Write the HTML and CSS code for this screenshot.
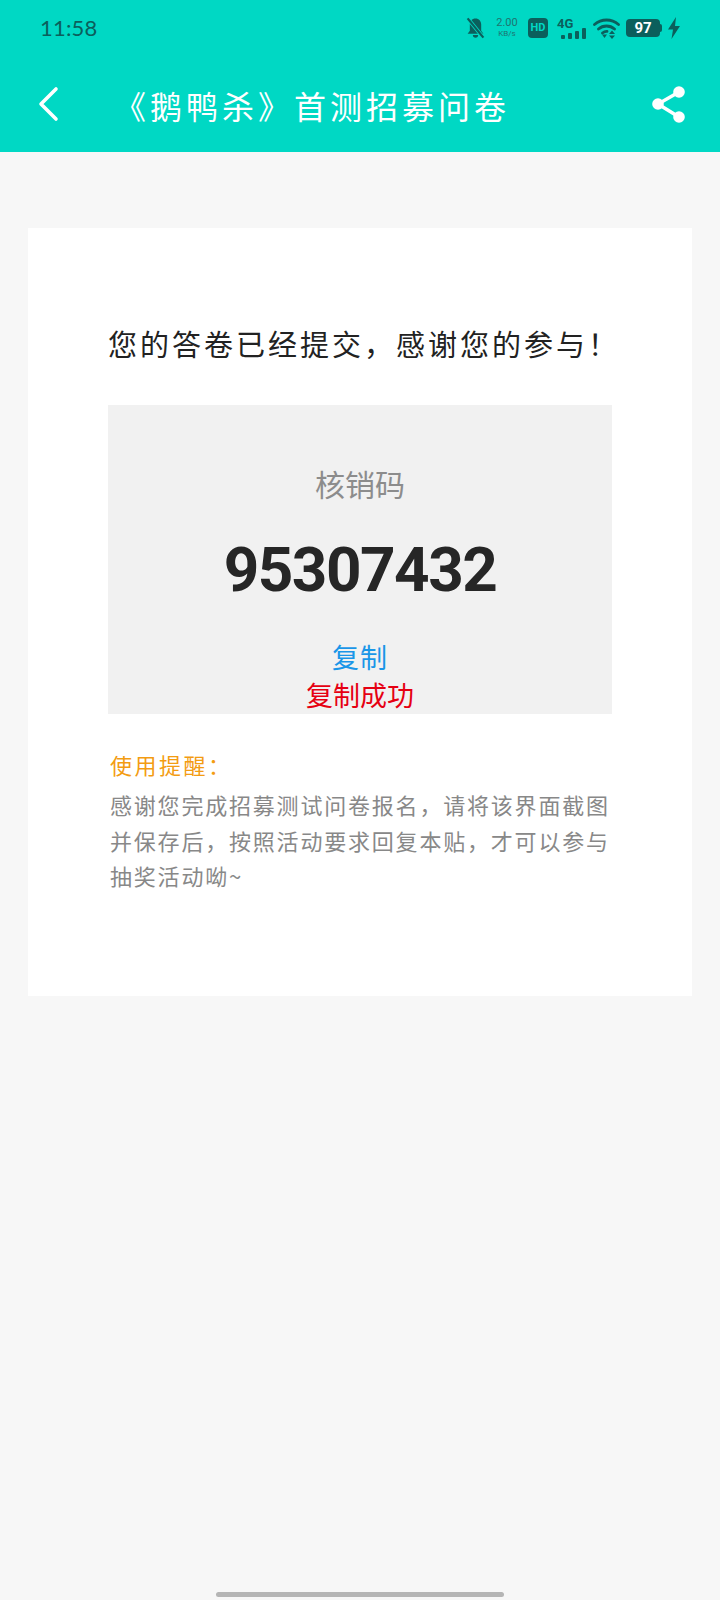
FILE: index.html
```html
<!DOCTYPE html>
<html lang="zh-CN">
<head>
    <meta charset="UTF-8">
    <meta name="viewport" content="width=device-width, initial-scale=1.0">
    <title>《鹅鸭杀》首测招募问卷</title>
    <link rel="stylesheet" href="styles.css">
</head>
<body>
    <header class="top">
        <div class="status">
            <span class="time">11:58</span>
            <div class="status-icons">
                <svg class="icon-bell" width="21" height="24" viewBox="0 0 24 26">
                    <path d="M12 2c-4 0-6.500 3-6.500 7v7L3 19.500h18L18.500 16V9c0-4-2.500-7-6.500-7z" fill="#0b5f5c"/>
                    <path d="M9 21h6a3 3 0 0 1-6 0z" fill="#0b5f5c"/>
                    <path d="M3 2l18 22" stroke="#00d8c4" stroke-width="4.500"/>
                    <path d="M3 2l18 22" stroke="#0b5f5c" stroke-width="2.600"/>
                </svg>
                <div class="speed"><span>2.00</span><span class="speed-unit">KB/s</span></div>
                <span class="hd">HD</span>
                <div class="signal">
                    <span class="signal-label">4G</span>
                    <svg width="25" height="11" viewBox="0 0 25 11">
                        <rect x="0" y="7" width="4" height="4" rx="1" fill="#0b5f5c"/>
                        <rect x="7" y="5" width="4" height="6" rx="1" fill="#0b5f5c"/>
                        <rect x="14" y="3" width="4" height="8" rx="1" fill="#0b5f5c"/>
                        <rect x="21" y="0" width="4" height="11" rx="1" fill="#0b5f5c"/>
                    </svg>
                </div>
                <svg class="icon-wifi" width="27" height="21" viewBox="0 0 27 21">
                    <path d="M1.500 6.500c7-6 17-6 24 0M5.500 11c4.500-4 11.500-4 16 0M9.500 15c1.500-1.300 3-1.800 4.500-1.700" fill="none" stroke="#0b5f5c" stroke-width="2.800" stroke-linecap="round"/>
                    <path d="M9 16.500h5L11.500 20z" fill="#0b5f5c"/>
                    <path d="M19 12.500l3 3.500h-6zM19 21l3-3.500h-6z" fill="#0b5f5c"/>
                </svg>
                <div class="battery"><span class="battery-level">97</span><span class="battery-tip"></span></div>
                <svg class="icon-bolt" width="14" height="22" viewBox="0 0 14 22">
                    <path d="M9 0L1 12.500h5L4.500 22 13 9H8z" fill="#0b5f5c"/>
                </svg>
            </div>
        </div>
        <div class="nav">
            <svg class="back" width="24" height="36" viewBox="0 0 24 36">
                <path d="M20 3L5 18l15 15" fill="none" stroke="#fff" stroke-width="3.600" stroke-linecap="round" stroke-linejoin="round"/>
            </svg>
            <h1 class="title">《鹅鸭杀》首测招募问卷</h1>
            <svg class="share" width="36" height="40" viewBox="0 0 36 40">
                <path d="M28 8L7 20l21 13" fill="none" stroke="#fff" stroke-width="3.500"/>
                <circle cx="28" cy="8" r="5.800" fill="#fff"/>
                <circle cx="7" cy="20" r="5.800" fill="#fff"/>
                <circle cx="28" cy="33" r="5.800" fill="#fff"/>
            </svg>
        </div>
    </header>

    <main class="card">
        <h2 class="done">您的答卷已经提交，感谢您的参与！</h2>
        <div class="code-box">
            <div class="code-label">核销码</div>
            <div class="code">95307432</div>
            <div class="copy">复制</div>
            <div class="copied">复制成功</div>
        </div>
        <div class="tip-title">使用提醒：</div>
        <p class="tip">感谢您完成招募测试问卷报名，请将该界面截图并保存后，按照活动要求回复本贴，才可以参与抽奖活动呦~</p>
    </main>

    <div class="home-bar"></div>
</body>
</html>
```

FILE: styles.css
```css
* {
    margin: 0;
    padding: 0;
    box-sizing: border-box;
}

body {
    width: 720px;
    min-height: 1600px;
    display: flex;
    flex-direction: column;
    background: #f7f7f7;
    font-family: "Noto Sans CJK SC", "Noto Sans", sans-serif;
}

.top {
    height: 152px;
    background: #00d8c4;
}

.status {
    height: 58px;
    padding: 0 39px 0 40px;
    display: flex;
    align-items: center;
    justify-content: space-between;
    color: #0b5f5c;
}

.time {
    margin-bottom: 4px;
    font-family: "Lato", sans-serif;
    font-size: 22px;
    letter-spacing: 0.200px;
}

.status-icons {
    display: flex;
    align-items: center;
    margin-bottom: 2px;
}

.speed {
    width: 22px;
    margin-left: 10px;
    display: flex;
    flex-direction: column;
    align-items: center;
    color: #1f7470;
    font-family: "Roboto", sans-serif;
    font-size: 11px;
    line-height: 12px;
}

.speed-unit {
    font-size: 8px;
    line-height: 10px;
}

.hd {
    width: 20px;
    height: 20px;
    margin-left: 10px;
    border-radius: 4px;
    background: #0b5f5c;
    color: #00d8c4;
    font-family: "Roboto", sans-serif;
    font-size: 11px;
    font-weight: 700;
    line-height: 20px;
    text-align: center;
}

.signal {
    width: 29px;
    height: 21px;
    margin-left: 9px;
    position: relative;
}

.signal svg {
    position: absolute;
    right: 0;
    bottom: 0;
}

.signal-label {
    font-family: "Roboto", sans-serif;
    font-size: 13px;
    font-weight: 700;
    line-height: 11px;
    display: block;
}

.icon-wifi {
    margin-left: 7px;
}

.battery {
    display: flex;
    align-items: center;
    margin-left: 6px;
}

.battery-level {
    width: 34px;
    height: 18px;
    border-radius: 4px;
    background: #0b5f5c;
    color: #fff;
    font-family: "Roboto", sans-serif;
    font-size: 15px;
    font-weight: 700;
    line-height: 19px;
    text-align: center;
}

.battery-tip {
    width: 2px;
    height: 8px;
    background: #0b5f5c;
    border-radius: 0 2px 2px 0;
}

.icon-bolt {
    margin-left: 5px;
}

.nav {
    height: 94px;
    padding: 0 33px 0 36px;
    display: flex;
    align-items: center;
}

.back {
    margin-bottom: 3px;
}

.title {
    flex: 1;
    margin-left: 54px;
    color: #fff;
    font-size: 32px;
    font-weight: 400;
    letter-spacing: 4px;
    white-space: nowrap;
}

.share {
    margin-bottom: 3px;
}

.card {
    width: 664px;
    height: 768px;
    margin: 76px auto 0;
    padding: 88px 80px 0;
    background: #fff;
}

.done {
    height: 54px;
    color: #222;
    font-size: 29px;
    font-weight: 400;
    line-height: 54px;
    letter-spacing: 3px;
    white-space: nowrap;
}

.code-box {
    height: 309px;
    margin-top: 35px;
    padding-top: 56px;
    background: #f1f1f1;
    text-align: center;
}

.code-label {
    color: #8c8c8c;
    font-size: 30px;
    line-height: 44px;
}

.code {
    margin-top: 27px;
    color: #262626;
    font-family: "Roboto", sans-serif;
    font-size: 62px;
    font-weight: 700;
    line-height: 76px;
    letter-spacing: -1.500px;
}

.copy {
    margin-top: 30px;
    color: #1a96e8;
    font-size: 27px;
    line-height: 38px;
    letter-spacing: 1px;
}

.copied {
    color: #e60012;
    font-size: 27px;
    line-height: 37px;
}

.tip-title {
    margin-top: 32px;
    margin-left: 2px;
    color: #f39c12;
    font-size: 22px;
    line-height: 36px;
    letter-spacing: 2.500px;
}

.tip {
    margin-top: 5px;
    margin-left: 2px;
    width: 504px;
    color: #888;
    font-size: 22px;
    line-height: 35.500px;
    letter-spacing: 1.800px;
}

.home-bar {
    width: 288px;
    height: 5px;
    margin: auto auto 3px;
    background: #b5b5b5;
    border-radius: 3px;
}
```
